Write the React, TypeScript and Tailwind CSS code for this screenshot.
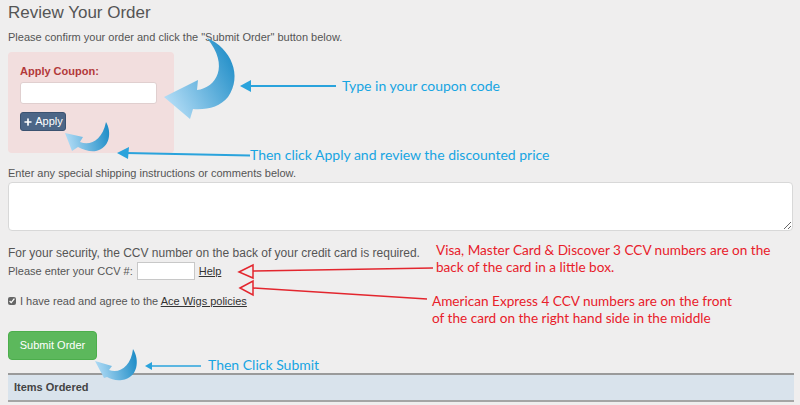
import { Plus } from 'lucide-react';

const sans = { fontFamily: '"Liberation Sans", Arial, sans-serif' };
const note = { fontFamily: 'Lato, "Open Sans", sans-serif' };

function Annotations() {
  return (
    <div className="pointer-events-none absolute inset-0">
      <svg width="800" height="405" className="absolute left-0 top-0">
        <defs>
          <linearGradient id="arrowBig" x1="240" y1="60" x2="165" y2="100" gradientUnits="userSpaceOnUse">
            <stop offset="0" stopColor="#1b8bc6" />
            <stop offset="1" stopColor="#b4ddf6" />
          </linearGradient>
          <linearGradient id="arrowApply" x1="110" y1="130" x2="65" y2="140" gradientUnits="userSpaceOnUse">
            <stop offset="0" stopColor="#1b8bc6" />
            <stop offset="1" stopColor="#b4ddf6" />
          </linearGradient>
          <linearGradient id="arrowSubmit" x1="138" y1="360" x2="95" y2="370" gradientUnits="userSpaceOnUse">
            <stop offset="0" stopColor="#1b8bc6" />
            <stop offset="1" stopColor="#b4ddf6" />
          </linearGradient>
        </defs>

        {/* curved arrows */}
        <path
          d="M207 38 C231 48 243 76 228 97 C220 107 207 110 193 109 L190 119 L164 97 L198 80 L197 90 C216 88 230 66 207 38 Z"
          fill="url(#arrowBig)"
        />
        <path
          d="M106 122 C112 132 110 148 96 151 C90 152 84 150 78 147 L72 151 L65 133 L83 137 L80 142 C90 146 102 141 106 122 Z"
          fill="url(#arrowApply)"
        />
        <path
          d="M133 349 C140 360 138 378 122 380 C116 381 111 379 107 377 L104 378 L95 361 L112 366 L109 370 C120 374 131 366 133 349 Z"
          fill="url(#arrowSubmit)"
        />

        {/* straight blue pointers */}
        <line x1="248" y1="86" x2="336" y2="86" stroke="#2aa3dc" strokeWidth="2" />
        <path d="M240 86 L251 80 L251 92 Z" fill="#2aa3dc" />
        <line x1="126" y1="153" x2="250" y2="155.5" stroke="#2aa3dc" strokeWidth="2" />
        <path d="M117 153 L129 147 L128 159 Z" fill="#2aa3dc" />
        <line x1="150" y1="366" x2="201" y2="366" stroke="#2aa3dc" strokeWidth="1.3" />
        <path d="M145 366 L152 362 L152 370 Z" fill="#2aa3dc" />

        {/* red pointers */}
        <line x1="253" y1="271" x2="433" y2="268" stroke="#e3262e" strokeWidth="1.5" />
        <path d="M239 272 L253 265 L253 278 Z" fill="none" stroke="#e3262e" strokeWidth="1.5" />
        <line x1="253" y1="288" x2="427" y2="299" stroke="#e3262e" strokeWidth="1.5" />
        <path d="M240 288 L253 281 L253 295 Z" fill="none" stroke="#e3262e" strokeWidth="1.5" />
      </svg>

      <div className="absolute left-[342px] top-[76px] text-[14px] leading-5 text-[#17a5e2]" style={note}>
        Type in your coupon code
      </div>
      <div className="absolute left-[250px] top-[145px] text-[14px] leading-5 text-[#17a5e2]" style={note}>
        Then click Apply and review the discounted price
      </div>
      <div className="absolute left-[208px] top-[355px] text-[14px] leading-5 text-[#17a5e2]" style={note}>
        Then Click Submit
      </div>
      <div className="absolute left-[436px] top-[242px] text-[13.6px] leading-[17px] text-[#e8202a]" style={note}>
        <div>Visa, Master Card &amp; Discover 3 CCV numbers are on the</div>
        <div>back of the card in a little box.</div>
      </div>
      <div className="absolute left-[432px] top-[293px] text-[13.6px] leading-[17px] text-[#e8202a]" style={note}>
        <div>American Express 4 CCV numbers are on the front</div>
        <div>of the card on the right hand side in the middle</div>
      </div>
    </div>
  );
}

export default function App() {
  return (
    <div className="relative h-[405px] w-[800px] overflow-hidden bg-[#efeeee] text-[#555]" style={sans}>
      <div className="flex flex-col px-2">
        <h1 className="mt-[3px] text-[17px] leading-5 text-[#555]">Review Your Order</h1>
        <p className="mt-[7px] text-[11px] leading-[14px]">
          Please confirm your order and click the "Submit Order" button below.
        </p>

        <div className="mt-[8px] flex h-[101px] w-[166px] flex-col rounded-[4px] bg-[#f2dede] px-3 pt-[12px]">
          <label className="text-[11px] font-bold leading-[14px] text-[#b2393a]">Apply Coupon:</label>
          <input className="mt-[4px] h-[22px] w-[137px] rounded-[3px] border border-[#e0cfcf] bg-white" />
          <button className="mt-[8px] flex h-[19px] w-[46px] items-center justify-center gap-[2px] rounded-[3px] border border-[#3b5270] bg-[#4c6687] text-[11px] text-white">
            <Plus size={10} strokeWidth={4} />
            Apply
          </button>
        </div>

        <p className="mt-[13px] text-[11px] leading-[14px]">Enter any special shipping instructions or comments below.</p>
        <textarea className="mt-[2px] h-[49px] w-[785px] resize-y rounded-[4px] border border-[#d8d8d8] bg-white" />

        <p className="mt-[15px] text-[12px] leading-[14px]">
          For your security, the CCV number on the back of your credit card is required.
        </p>
        <div className="mt-[2px] flex h-[18px] items-center text-[11px] leading-[14px]">
          <span>Please enter your CCV #:</span>
          <input className="ml-[4px] h-[18px] w-[58px] border border-[#c8c8c8] bg-white" />
          <a className="ml-[4px] text-[#333] underline">Help</a>
        </div>

        <div className="mt-[14px] flex h-[14px] items-center text-[11px] leading-[14px]">
          <input type="checkbox" defaultChecked className="m-0 h-[8px] w-[8px] accent-[#666]" />
          <span className="ml-[4px]">
            I have read and agree to the <a className="text-[#333] underline">Ace Wigs policies</a>
          </span>
        </div>

        <button className="mt-[23px] h-[29px] w-[89px] rounded-[4px] border border-[#4cae4c] bg-[#5cb85c] text-[11px] text-white">
          Submit Order
        </button>

        <div className="mt-[13px] flex h-[29px] w-[786px] items-center border-y-2 border-t-[#9a9a9a] border-b-[#a5a5a5] bg-[#d9e3ec] px-[6px]">
          <span className="text-[11px] font-bold text-[#444]">Items Ordered</span>
        </div>
      </div>

      <Annotations />
    </div>
  );
}
